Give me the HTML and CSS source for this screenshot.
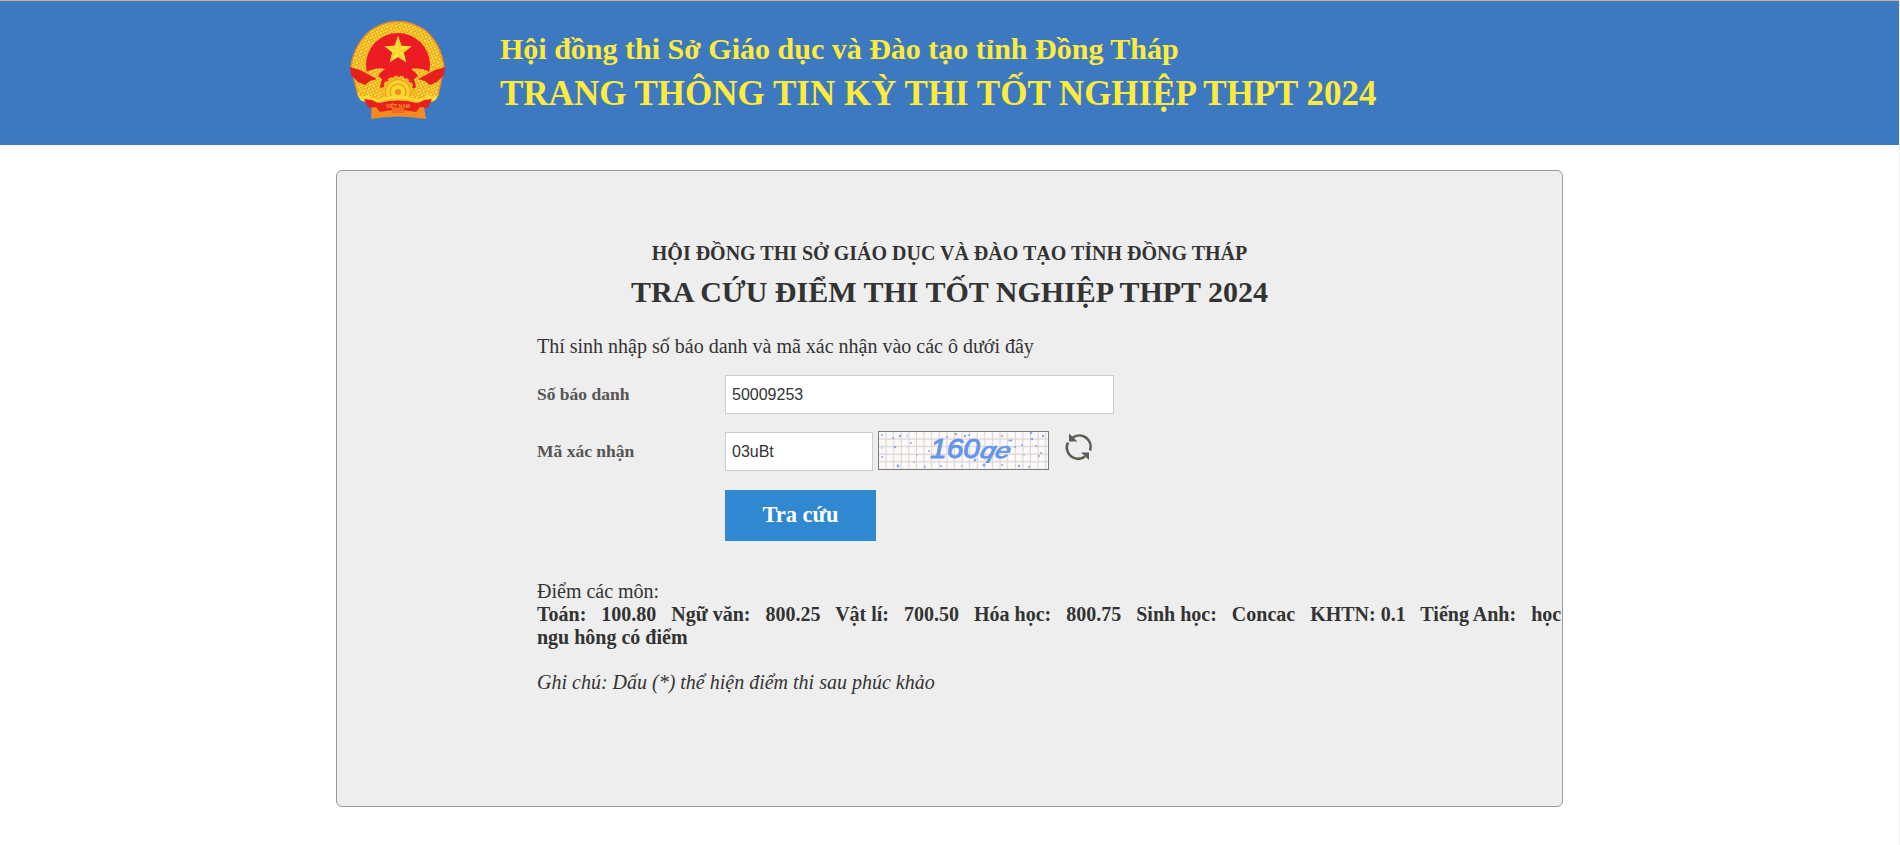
FILE: index.html
```html
<!DOCTYPE html>
<html lang="vi">
<head>
<meta charset="utf-8">
<title>Tra cứu điểm thi tốt nghiệp THPT 2024</title>
<link rel="stylesheet" href="styles.css">
</head>
<body>
<header class="header">
  <div class="container header-inner">
    <svg class="emblem" viewBox="0 0 96 99" aria-hidden="true">
      <defs>
        <pattern id="grain" width="4" height="4" patternUnits="userSpaceOnUse" patternTransform="rotate(20)">
          <rect width="4" height="4" fill="#e8a01c"/>
          <circle cx="1" cy="1" r="1.200" fill="#ffe94a"/><circle cx="3" cy="3" r="1.100" fill="#fbd92f"/>
        </pattern>
      </defs>
      <path d="M22 80h51l3 18q-28-5-55 0z" fill="#f58a1f"/>
      <path d="M1 46Q4 24 20 10Q48-9 76 10Q91 24 94 46L88 74Q48 92 8 74Z" fill="url(#grain)" stroke="#f28c1c" stroke-width="1.500"/>
      <circle cx="48" cy="44" r="32" fill="#ed1c24"/>
      <path d="M48 15l3.500 9.800 10 .4-7.800 6.400 2.600 9.600L48 36l-8.300 5.200 2.600-9.600-7.800-6.400 10-.4z" fill="#ffe93a"/>
      <path d="M48 15v15l3.500-5.200zM61.500 25.200L48 30l5.700 1.600zM56.300 41.200L48 30v6zM39.700 41.200L48 30l-5.700 1.600zM34.500 25.200L48 30l-3.500-5.200z" fill="#fbd02c"/>
      <path d="M18 50q10-4 17-2-5 3-7 7l4 3-2 8 4 3-4 9q-14 3-22-6l0-11z" fill="url(#grain)"/>
      <path d="M78 50q-10-4-17-2 5 3 7 7l-4 3 2 8-4 3 4 9q14 3 22-6l0-11z" fill="url(#grain)"/>
      <path d="M0 46l10 3 17 9-7 2-5 4-7-3-7-7zM95 46l-10 3-17 9 7 2 5 4 7-3 7-7z" fill="#e8201c"/>
      <circle cx="48" cy="71" r="15" fill="#f9d82d" stroke="#f2b424" stroke-width="3" stroke-dasharray="4 2"/>
      <g fill="none" stroke="#f0a020" stroke-width="1.500"><circle cx="48" cy="71" r="12.500"/><circle cx="48" cy="71" r="8"/></g>
      <circle cx="48" cy="71" r="3" fill="#ed8c1e"/>
      <path d="M8 73q4 5 11 0 3 7 10 5 19-7 38 0 7 2 10-5 7 5 11 0 0 7-8 8l-9 1q-23-8-46 0l-9-1q-8-1-8-8z" fill="#ffdb35"/>
      <path d="M14 78l8 1 6 3q20-6 40 0l6-3 8-1-4 9-8-1-4 5q-18-4-36 0l-4-5-8 1z" fill="#e8201c"/>
      <path d="M29 81q19-5 38 0" fill="none" stroke="#ffbd34" stroke-width="2"/>
      <path d="M42 87h12v5H42z" fill="#f26a1d"/>
      <text class="emblem-label" x="48" y="87" text-anchor="middle">VIỆT NAM</text>
    </svg>
    <div class="header-text">
      <div class="header-sub">Hội đồng thi Sở Giáo dục và Đào tạo tỉnh Đồng Tháp</div>
      <div class="header-title">TRANG THÔNG TIN KỲ THI TỐT NGHIỆP THPT 2024</div>
    </div>
  </div>
</header>
<main class="container panel">
  <h2 class="council">HỘI ĐỒNG THI SỞ GIÁO DỤC VÀ ĐÀO TẠO TỈNH ĐỒNG THÁP</h2>
  <h1 class="title">TRA CỨU ĐIỂM THI TỐT NGHIỆP THPT 2024</h1>
  <form class="lookup">
    <p class="hint">Thí sinh nhập số báo danh và mã xác nhận vào các ô dưới đây</p>
    <div class="row">
      <label class="label" for="sbd">Số báo danh</label>
      <input class="field field-wide" id="sbd" type="text" value="50009253">
    </div>
    <div class="row row-code">
      <label class="label" for="code">Mã xác nhận</label>
      <input class="field field-code" id="code" type="text" value="03uBt">
      <svg class="captcha" viewBox="0 0 171 39">
        <defs><pattern id="grid" width="7.600" height="7.600" patternUnits="userSpaceOnUse" x="1" y="1"><path d="M7 0V7H0" fill="none" stroke="#d6d3d3" stroke-width="1"/></pattern></defs>
        <rect width="171" height="39" fill="#fdf9f9"/>
        <rect width="171" height="39" fill="url(#grid)"/>
        <g fill="#86a9ee">
          <circle cx="4" cy="4" r="1"/><circle cx="15" cy="7" r="1"/><circle cx="22" cy="5" r="1.200"/><circle cx="17" cy="16" r="1.200"/><circle cx="4" cy="26" r="1"/><circle cx="20" cy="35" r="1.400"/><circle cx="33" cy="12" r="1"/><circle cx="29" cy="5" r=".8"/><circle cx="51" cy="20" r="1"/><circle cx="39" cy="24" r=".8"/><circle cx="36" cy="31" r=".8"/><circle cx="47" cy="36" r="1"/><circle cx="63" cy="35" r="1"/><circle cx="69" cy="6" r="1"/><circle cx="78" cy="3" r="1.200"/><circle cx="87" cy="5" r="1.300"/><circle cx="91" cy="4" r="1"/><circle cx="97" cy="29" r="1.400"/><circle cx="106" cy="34" r="1.600"/><circle cx="124" cy="5" r="1"/><ellipse cx="132.500" cy="9.500" rx="2.200" ry="1"/><circle cx="137" cy="16" r="1"/><circle cx="144" cy="14" r="1"/><circle cx="153" cy="2" r="1.300"/><circle cx="154" cy="8" r="1.300"/><circle cx="158" cy="15" r="1"/><circle cx="165" cy="5" r="1.200"/><circle cx="163" cy="22" r="1"/><circle cx="161" cy="25" r="1"/><circle cx="151" cy="36" r="1"/><circle cx="141" cy="35" r="1.200"/><circle cx="124" cy="34" r="1"/><circle cx="84" cy="35" r=".8"/><circle cx="146" cy="24" r=".8"/><circle cx="4" cy="17" r=".8"/>
        </g>
        <text class="captcha-text" transform="translate(52 26.500)" textLength="50" lengthAdjust="spacingAndGlyphs">160</text>
        <text class="captcha-text captcha-tail" transform="translate(101 26.500) skewX(-14)" textLength="30" lengthAdjust="spacingAndGlyphs">qe</text>
        <rect x=".5" y=".5" width="170" height="38" fill="none" stroke="#7b7b7b"/>
      </svg>
      <svg class="refresh" viewBox="0 0 28 28" aria-hidden="true">
        <g fill="none" stroke="#5d5d56" stroke-width="2.600">
          <path d="M7.500 4.800A11.300 11.300 0 0 1 25 17.500"/>
          <path d="M3 9.500A11.300 11.300 0 0 0 20 23.500"/>
        </g>
        <path d="M4 .5V8.500H12.500zM24 27V19.500H16z" fill="#5d5d56"/>
      </svg>
    </div>
    <button class="submit" type="button">Tra cứu</button>
  </form>
  <section class="result">
    <div>Điểm các môn:</div>
    <div class="scores">Toán: &nbsp; 100.80 &nbsp; Ngữ văn: &nbsp; 800.25 &nbsp; Vật lí: &nbsp; 700.50 &nbsp; Hóa học: &nbsp; 800.75 &nbsp; Sinh học: &nbsp; Concac &nbsp; KHTN: 0.1 &nbsp; Tiếng Anh: &nbsp; học<br>ngu hông có điểm</div>
    <p class="note">Ghi chú: Dấu (*) thể hiện điểm thi sau phúc khảo</p>
  </section>
</main>
</body>
</html>
```
FILE: styles.css
```css
* { box-sizing: border-box; }
html { background: #fff; }
body {
  margin: 0;
  min-height: 845px;
  border-right: 1px solid #f0f0f0;
  color: #333;
  font: 20px/23px "Liberation Serif", "Times New Roman", serif;
}
.container { width: 1227px; margin: 0 auto; }
.header {
  height: 145px;
  background: #3d79c1;
  border-top: 1px solid #c9b08f;
}
.header-inner { display: flex; padding: 20px 0 0 14px; }
.emblem { width: 96px; height: 99px; flex: none; }
.emblem-label { font: bold 5px "Liberation Sans", sans-serif; fill: #f59a25; }
.header-text {
  margin-left: 54px;
  color: #ffeb3b;
  font-weight: bold;
  white-space: nowrap;
}
.header-sub { font-size: 30px; line-height: 44px; margin-top: 6px; }
.header-title { font-size: 35px; line-height: 46px; }
.panel {
  height: 637px;
  margin-top: 25px;
  padding-top: 69px;
  background: #eee;
  border: 1px solid #999;
  border-radius: 6px;
}
.council, .title { margin: 0; text-align: center; white-space: nowrap; }
.council { font-size: 20px; line-height: 26px; }
.title { font-size: 30px; line-height: 36px; margin-top: 8px; }
.lookup { padding-left: 200px; }
.hint { margin: 25px 0 17px; }
.row { display: flex; align-items: center; height: 39px; }
.row-code { margin-top: 18px; }
.label { width: 188px; font-size: 17.5px; font-weight: bold; color: #555; }
.field {
  height: 39px;
  padding: 0 6px;
  border: 1px solid #ccc;
  background: #fff;
  color: #333;
  font: 16px "Liberation Sans", Arial, sans-serif;
}
.field-wide { width: 389px; }
.field-code { width: 148px; }
.captcha { width: 171px; height: 39px; margin: -2px 0 0 5px; }
.captcha-text {
  font: italic 27px "Liberation Sans", sans-serif;
  fill: #6495ed;
  stroke: #6495ed;
  stroke-width: 0.9px;
}
.captcha-tail { font-size: 22px; }
.refresh { width: 28px; height: 28px; margin: -9px 0 0 16px; }
.submit {
  display: block;
  width: 151px;
  height: 51px;
  margin: 19px 0 0 188px;
  padding: 0 0 2px;
  border: 0;
  background: #3088d0;
  color: #fff;
  font: bold 22.5px "Liberation Serif", "Times New Roman", serif;
}
.result { margin-top: 39px; padding-left: 200px; white-space: nowrap; }
.scores { font-weight: bold; }
.note { margin: 22px 0 0; font-style: italic; }
```
